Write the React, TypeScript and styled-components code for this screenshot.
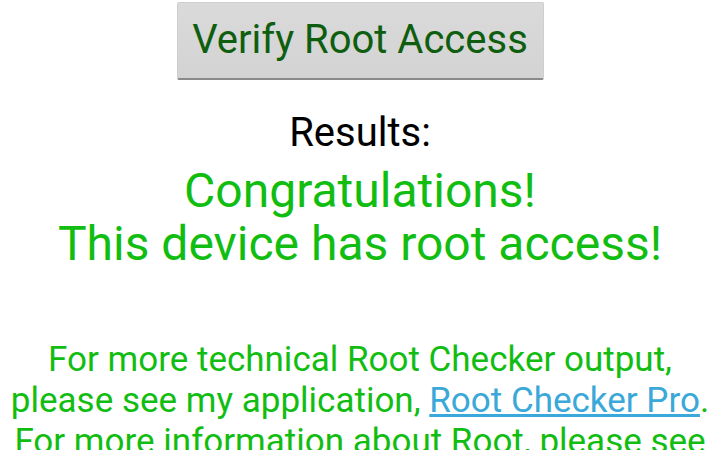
import styled, { createGlobalStyle } from "styled-components";

const GlobalStyle = createGlobalStyle`
  html, body {
    margin: 0;
    padding: 0;
    background: #ffffff;
    overflow: hidden;
  }
  body {
    font-family: Roboto, "Noto Sans", sans-serif;
  }
`;

const Screen = styled.div`
  width: 720px;
  height: 450px;
  overflow: hidden;
  display: flex;
  flex-direction: column;
  align-items: center;
  padding-top: 2px;
  box-sizing: border-box;

  & > * {
    flex-shrink: 0;
  }
`;

const VerifyButton = styled.button`
  width: 367px;
  height: 78px;
  background: linear-gradient(#dadada, #d3d3d3);
  border: 1px solid #cfcfcf;
  border-bottom: 2px solid #8a8a8a;
  border-radius: 2px;
  color: #0f5e0f;
  font-family: Roboto, sans-serif;
  font-size: 40px;
  line-height: 47px;
  padding: 0 0 3px;
  white-space: nowrap;
  cursor: pointer;
`;

const ResultsLabel = styled.div`
  margin-top: 29px;
  font-size: 40px;
  line-height: 48px;
  color: #000;
`;

const Verdict = styled.div`
  margin-top: 7px;
  font-size: 48px;
  line-height: 53px;
  color: #12bd12;
  text-align: center;
  white-space: nowrap;
`;

const Info = styled.div`
  margin-top: 69px;
  font-size: 35px;
  line-height: 41px;
  color: #12bd12;
  text-align: center;
  white-space: nowrap;
`;

const Link = styled.a`
  color: #3aa8d8;
  text-decoration: underline;
`;

export default function App() {
  return (
    <>
      <GlobalStyle />
      <Screen>
        <VerifyButton>Verify Root Access</VerifyButton>
        <ResultsLabel>Results:</ResultsLabel>
        <Verdict>
          Congratulations!
          <br />
          This device has root access!
        </Verdict>
        <Info>
          For more technical Root Checker output,
          <br />
          please see my application, <Link href="#">Root Checker Pro</Link>.
          <br />
          For more information about Root, please see
        </Info>
      </Screen>
    </>
  );
}
